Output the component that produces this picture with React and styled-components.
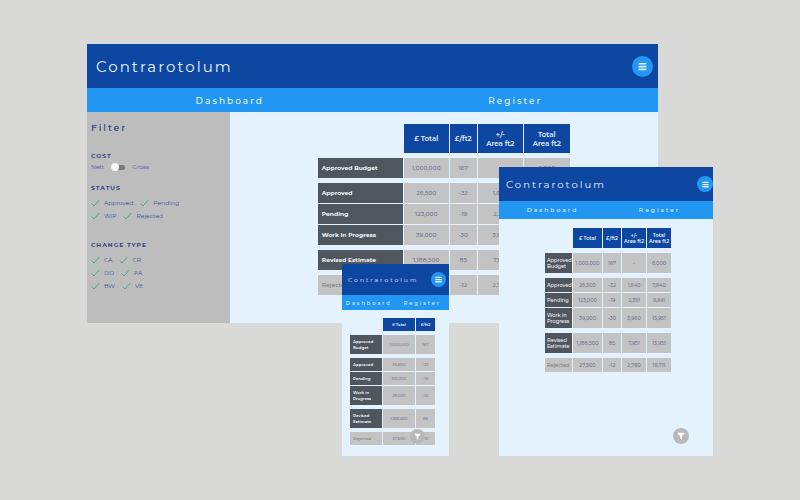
import React from "react";
import styled, { createGlobalStyle, ThemeProvider, useTheme } from "styled-components";

const Global = createGlobalStyle`
  * { box-sizing: border-box; }
  body { margin: 0; background: #d9d9d8; font-family: Montserrat, Inter, "Open Sans", sans-serif; }
`;

const navy = "#0d47a1";
const blue = "#2196f3";
const pale = "#e3f2fd";

const desktop = {
  header: 44, title: 15, titleGap: 2, padLeft: 9, padRight: 5, round: 21, bars: 9,
  nav: 24, navFont: 9, navGap: 2,
  headFont: 7, labelFont: 6, labelWeight: 700, cellFont: 6, line: 9,
  headRow: 29, row: 20, tallRow: 20, spacer: 3,
  columns: [85, 45, 27, 45, 46], inset: 4,
};

const tablet = {
  header: 34, title: 10, titleGap: 2, padLeft: 7, padRight: 0, round: 16, bars: 7,
  nav: 18, navFont: 6, navGap: 2,
  headFont: 5, labelFont: 5, labelWeight: 500, cellFont: 5, line: 6,
  headRow: 20, row: 14, tallRow: 20, spacer: 3,
  columns: [27, 29, 18, 24, 24], inset: 2,
};

const phone = {
  header: 31, title: 6, titleGap: 2, padLeft: 6, padRight: 3, round: 15, bars: 7,
  nav: 15, navFont: 5, navGap: 2,
  headFont: 4, labelFont: 4, labelWeight: 600, cellFont: 4, line: 6,
  headRow: 13, row: 13, tallRow: 19, spacer: 2,
  columns: [32, 32, 19], inset: 3,
};

const Canvas = styled.main`
  position: relative;
  min-height: 100vh;
  overflow: hidden;
`;

const Device = styled.section`
  position: absolute;
  display: flex;
  flex-direction: column;
  background: ${pale};
`;

const DesktopDevice = styled(Device)`
  top: 44px;
  left: 87px;
  right: 142px;
  min-height: 279px;
`;

const TabletDevice = styled(Device)`
  top: 167px;
  left: 499px;
  right: 87px;
  min-height: 289px;
`;

const PhoneDevice = styled(Device)`
  top: 264px;
  left: 342px;
  width: 107px;
  min-height: 192px;
`;

const Header = styled.header`
  display: flex;
  align-items: center;
  justify-content: space-between;
  height: ${({ theme }) => theme.header}px;
  padding: 0 ${({ theme }) => theme.padRight}px 0 ${({ theme }) => theme.padLeft}px;
  background: ${navy};
`;

const Title = styled.h1`
  margin: 0;
  color: ${pale};
  font-size: ${({ theme }) => theme.title}px;
  font-weight: 400;
  letter-spacing: ${({ theme }) => theme.titleGap}px;
`;

const RoundButton = styled.button`
  display: grid;
  place-items: center;
  width: ${({ theme }) => theme.round}px;
  height: ${({ theme }) => theme.round}px;
  padding: 0;
  border: 0;
  border-radius: 50%;
  background: ${blue};
  color: ${pale};
`;

const FilterButton = styled(RoundButton)`
  position: absolute;
  right: 24px;
  bottom: 12px;
  background: #b8b8b8;
  color: #ffffff;
`;

const Nav = styled.nav`
  display: grid;
  grid-template-columns: 1fr 1fr;
  align-items: center;
  height: ${({ theme }) => theme.nav}px;
  background: ${blue};
`;

const NavLink = styled.a`
  color: ${pale};
  font-size: ${({ theme }) => theme.navFont}px;
  font-weight: 500;
  letter-spacing: ${({ theme }) => theme.navGap}px;
  text-align: center;
  text-decoration: none;
`;

const Body = styled.div`
  display: flex;
  flex: 1;
`;

const Sidebar = styled.aside`
  flex: 0 0 25%;
  padding: 10px 4px;
  background: #bdbdbd;
  color: #40508c;
  font-size: 6px;
  line-height: 12px;
`;

const FilterTitle = styled.h2`
  margin: 0 0 16px;
  font-size: 9px;
  line-height: 12px;
  font-weight: 600;
  letter-spacing: 2px;
`;

const Group = styled.fieldset`
  min-width: 0;
  margin: 0 0 ${({ $space }) => $space}px;
  padding: 0;
  border: 0;
`;

const Legend = styled.legend`
  margin-bottom: ${({ $space }) => $space}px;
  padding: 0;
  color: #34468a;
  font-weight: 700;
  letter-spacing: 1px;
  line-height: 12px;
`;

const SwitchLabel = styled.label`
  display: flex;
  align-items: center;
  gap: 7px;
  height: 10px;
`;

const Switch = styled.input`
  appearance: none;
  display: flex;
  align-items: center;
  width: 14px;
  height: 5px;
  margin: 0;
  border-radius: 3px;
  background: #7b7b7b;
  &::before {
    content: "";
    flex: none;
    width: 8px;
    height: 8px;
    border-radius: 50%;
    background: #f7f7f7;
  }
`;

const Options = styled.div`
  display: flex;
  gap: 7px;
  height: 13px;
`;

const Option = styled.label`
  position: relative;
  display: flex;
  align-items: center;
  gap: 4px;
`;

const HiddenCheck = styled.input`
  position: absolute;
  inset: 0;
  margin: 0;
  opacity: 0;
`;

const TickIcon = styled.svg`
  width: 9px;
  height: 8px;
  fill: none;
  stroke: #4fa58d;
`;

const TableArea = styled.div`
  flex: 1;
  display: flex;
  align-items: flex-start;
  justify-content: ${({ $centered }) => ($centered ? "center" : "flex-start")};
  padding: ${({ $top }) => $top}px 0 8px ${({ $left }) => $left}px;
`;

const CostTable = styled.table`
  table-layout: fixed;
  width: ${({ theme }) => theme.columns.reduce((sum, w) => sum + w + 1, 1)}px;
  border-spacing: 1px;
  line-height: ${({ theme }) => theme.line}px;
`;

const Column = styled.col`
  width: ${({ $width }) => $width}px;
`;

const HeadCell = styled.th`
  height: ${({ theme }) => theme.headRow}px;
  padding: 0;
  background: ${navy};
  color: ${pale};
  font-size: ${({ theme }) => theme.headFont}px;
  font-weight: 600;
  white-space: pre-line;
`;

const EmptyCell = styled.td`
  padding: 0;
`;

const SpacerCell = styled.td`
  height: ${({ theme }) => theme.spacer}px;
  padding: 0;
`;

const RowLabel = styled.th`
  height: ${({ theme, $tall }) => ($tall ? theme.tallRow : theme.row)}px;
  padding: 0 0 0 ${({ theme }) => theme.inset}px;
  background: ${({ $muted }) => ($muted ? "#c3c3c3" : "#50565e")};
  color: ${({ $muted }) => ($muted ? "#777a82" : "#f2f6fa")};
  font-size: ${({ theme }) => theme.labelFont}px;
  font-weight: ${({ theme, $muted }) => ($muted ? 500 : theme.labelWeight)};
  text-align: left;
`;

const Cell = styled.td`
  padding: 0;
  background: #c3c3c3;
  color: #707390;
  font-size: ${({ theme }) => theme.cellFont}px;
  font-weight: 500;
  text-align: center;
`;

const groups = [
  [["Approved Budget", "1,000,000", "167", "-", "6,000"]],
  [
    ["Approved", "26,500", "-32", "1,640", "7,640"],
    ["Pending", "123,000", "-19", "2,351", "9,991"],
    ["Work in Progress", "39,000", "-30", "3,960", "13,951"],
  ],
  [["Revised Estimate", "1,188,500", "85", "7,951", "13,951"]],
  [["Rejected", "27,500", "-12", "2,760", "16,711"]],
];

const headings = ["£ Total", "£/ft2", "+/-\nArea ft2", "Total\nArea ft2"];

function BarsIcon({ size }) {
  return (
    <svg width={size} height={size} viewBox="0 0 9 9" fill="currentColor" aria-hidden="true">
      <rect x="0.5" y="0.9" width="8" height="1.7" rx="0.3" />
      <rect x="0.5" y="3.7" width="8" height="1.7" rx="0.3" />
      <rect x="0.5" y="6.5" width="8" height="1.7" rx="0.3" />
    </svg>
  );
}

function FunnelIcon({ size }) {
  return (
    <svg width={size} height={size} viewBox="0 0 8 8" fill="currentColor" aria-hidden="true">
      <path d="M0.6 0.8h6.8v0.9L5 4.1v3.5L3 6.3V4.1L0.6 1.7z" />
    </svg>
  );
}

function TopBar() {
  const { bars } = useTheme();
  return (
    <>
      <Header>
        <Title>Contrarotolum</Title>
        <RoundButton type="button" aria-label="Menu"><BarsIcon size={bars} /></RoundButton>
      </Header>
      <Nav>
        <NavLink href="#dashboard">Dashboard</NavLink>
        <NavLink href="#register">Register</NavLink>
      </Nav>
    </>
  );
}

function Costs() {
  const { columns } = useTheme();
  const shown = columns.length - 1;
  return (
    <CostTable>
      <colgroup>
        {columns.map((width, i) => <Column key={i} $width={width} />)}
      </colgroup>
      <thead>
        <tr>
          <EmptyCell />
          {headings.slice(0, shown).map((text) => <HeadCell key={text} scope="col">{text}</HeadCell>)}
        </tr>
      </thead>
      {groups.map((rows, g) => (
        <tbody key={g}>
          <tr><SpacerCell colSpan={shown + 1} /></tr>
          {rows.map(([name, ...values]) => (
            <tr key={name}>
              <RowLabel scope="row" $tall={name.includes(" ")} $muted={name === "Rejected"}>{name}</RowLabel>
              {values.slice(0, shown).map((value, i) => <Cell key={i}>{value}</Cell>)}
            </tr>
          ))}
        </tbody>
      ))}
    </CostTable>
  );
}

function Check({ name }) {
  return (
    <Option>
      <HiddenCheck type="checkbox" defaultChecked />
      <TickIcon viewBox="0 0 9 8" aria-hidden="true"><path d="M0.7 4.6L3 7L8.3 1" /></TickIcon>
      {name}
    </Option>
  );
}

function CheckGroup({ title, rows, space }) {
  return (
    <Group $space={space}>
      <Legend $space={2}>{title}</Legend>
      {rows.map((names) => (
        <Options key={names[0]}>
          {names.map((name) => <Check key={name} name={name} />)}
        </Options>
      ))}
    </Group>
  );
}

export default function App() {
  return (
    <Canvas>
      <Global />
      <ThemeProvider theme={desktop}>
        <DesktopDevice>
          <TopBar />
          <Body>
            <Sidebar>
              <FilterTitle>Filter</FilterTitle>
              <Group $space={10}>
                <Legend $space={0}>COST</Legend>
                <SwitchLabel>Nett <Switch type="checkbox" role="switch" /> Gross</SwitchLabel>
              </Group>
              <CheckGroup title="STATUS" rows={[["Approved", "Pending"], ["WiP", "Rejected"]]} space={17} />
              <CheckGroup title="CHANGE TYPE" rows={[["CA", "CR"], ["DD", "PA"], ["BW", "VE"]]} space={0} />
            </Sidebar>
            <TableArea $top={11} $left={87}><Costs /></TableArea>
          </Body>
        </DesktopDevice>
      </ThemeProvider>
      <ThemeProvider theme={tablet}>
        <TabletDevice>
          <TopBar />
          <Body><TableArea $top={8} $left={4} $centered><Costs /></TableArea></Body>
          <FilterButton type="button" aria-label="Filter"><FunnelIcon size={8} /></FilterButton>
        </TabletDevice>
      </ThemeProvider>
      <ThemeProvider theme={phone}>
        <PhoneDevice>
          <TopBar />
          <Body><TableArea $top={7} $left={7}><Costs /></TableArea></Body>
          <FilterButton type="button" aria-label="Filter"><FunnelIcon size={7} /></FilterButton>
        </PhoneDevice>
      </ThemeProvider>
    </Canvas>
  );
}
